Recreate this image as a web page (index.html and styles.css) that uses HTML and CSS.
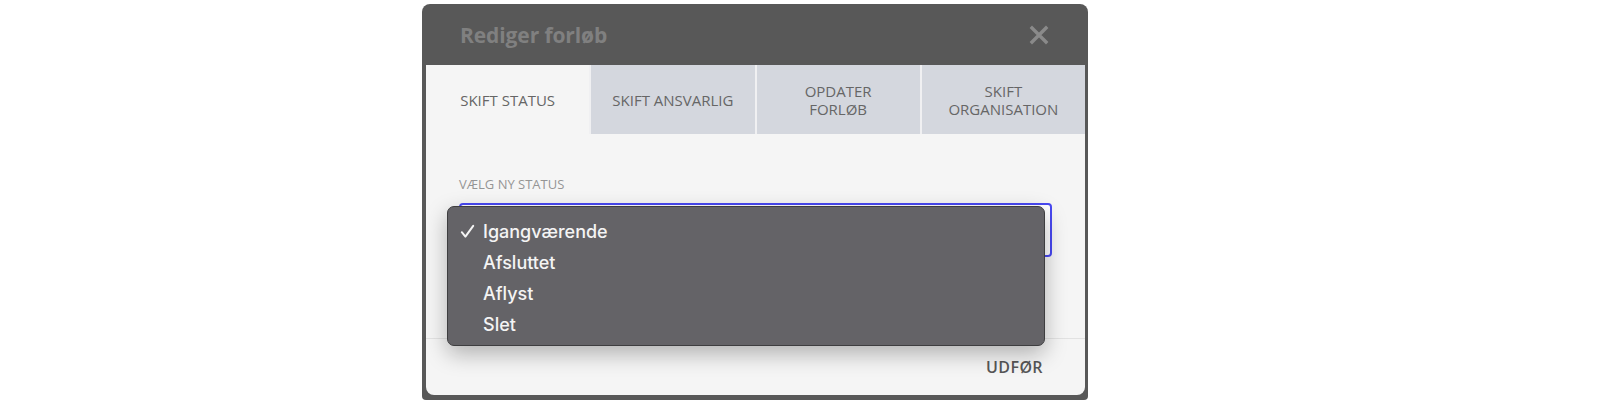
FILE: index.html
```html
<!DOCTYPE html>
<html lang="da">
<head>
  <meta charset="UTF-8">
  <title>Rediger forløb</title>
  <link rel="stylesheet" href="styles.css">
</head>
<body>
  <div class="page">
    <div class="modal">
      <div class="modal-header">
        <div class="modal-title">Rediger forløb</div>
        <div class="modal-close">
          <svg width="20" height="20" viewBox="0 0 20 20">
            <path d="M3 3 L17 17 M17 3 L3 17" stroke="#8a8a8a" stroke-width="3.4" stroke-linecap="square" fill="none"/>
          </svg>
        </div>
      </div>

      <div class="modal-box">
        <div class="tabs">
          <div class="tab active">SKIFT STATUS</div>
          <div class="tab">SKIFT ANSVARLIG</div>
          <div class="tab">OPDATER<br>FORLØB</div>
          <div class="tab">SKIFT<br>ORGANISATION</div>
        </div>

        <div class="modal-body">
          <div class="field-label">VÆLG NY STATUS</div>
          <div class="select-wrap">
            <div class="select-box"></div>
            <div class="select-menu">
              <div class="menu-item">
                <span class="check">
                  <svg width="15" height="15" viewBox="0 0 15 15">
                    <path d="M1.8 8.2 L5.4 12.6 L13.2 1.8" stroke="#f4f4f4" stroke-width="2" stroke-linecap="round" stroke-linejoin="round" fill="none"/>
                  </svg>
                </span>Igangværende
              </div>
              <div class="menu-item"><span class="check"></span>Afsluttet</div>
              <div class="menu-item"><span class="check"></span>Aflyst</div>
              <div class="menu-item"><span class="check"></span>Slet</div>
            </div>
          </div>
        </div>

        <div class="modal-footer">
          <button class="btn-submit">UDFØR</button>
        </div>
      </div>
    </div>
  </div>
</body>
</html>
```

FILE: styles.css
```css
* { box-sizing: border-box; }
body { margin: 0; padding: 0; background: #fff; font-family: "Open Sans", Arial, sans-serif; }

.page {
  padding: 4px 0 0 422px;
}

.modal {
  width: 666px;
  background-color: #585858;
  border-radius: 8px 8px 4px 4px;
  padding: 0 3px 5px 4px;
}

.modal-header {
  height: 61px;
  display: flex;
  align-items: center;
  justify-content: space-between;
  padding: 0 36px 0 34px;
}

.modal-title {
  font-size: 21px;
  font-weight: bold;
  color: #808080;
  letter-spacing: -0.1px;
}

.modal-close {
  display: flex;
  align-items: center;
  margin-top: 1px;
}

.modal-box {
  background-color: #f5f5f5;
  border-radius: 0 0 8px 8px;
}

.tabs {
  display: flex;
  height: 69px;
  gap: 2px;
  background-color: #f0f0f2;
}

.tab {
  flex: 1;
  display: flex;
  align-items: center;
  justify-content: center;
  text-align: center;
  font-size: 15px;
  line-height: 18px;
  color: #666;
  background-color: #d4d7de;
}

.tab.active {
  background-color: #f5f5f5;
}

.modal-body {
  padding: 41px 33px 81px;
}

.field-label {
  font-size: 13px;
  color: #959595;
  margin-bottom: 10px;
}

.select-wrap {
  position: relative;
}

.select-box {
  height: 54px;
  border: 2px solid #4848f2;
  border-radius: 4px;
  background-color: #fff;
}

.select-menu {
  position: absolute;
  left: -12px;
  top: 3px;
  width: 598px;
  height: 140px;
  background-color: #646367;
  border: 1px solid #3e3e40;
  border-radius: 7px;
  padding: 9px 0 5px;
  box-shadow: 0 8px 22px rgba(0, 0, 0, 0.28);
}

.menu-item {
  display: flex;
  align-items: center;
  height: 31px;
  padding-left: 12px;
  font-family: Inter, Roboto, sans-serif;
  font-size: 18px;
  font-weight: 500;
  color: #f4f4f4;
}

.check {
  width: 23px;
  display: flex;
  align-items: center;
}

.modal-footer {
  border-top: 1px solid #e2e2e2;
  height: 57px;
  display: flex;
  align-items: center;
  justify-content: flex-end;
  padding-right: 42px;
}

.btn-submit {
  background: none;
  border: none;
  font-family: "Open Sans", Arial, sans-serif;
  font-size: 16px;
  font-weight: 600;
  letter-spacing: 0.4px;
  color: #575757;
  padding: 0;
  cursor: pointer;
}
```
